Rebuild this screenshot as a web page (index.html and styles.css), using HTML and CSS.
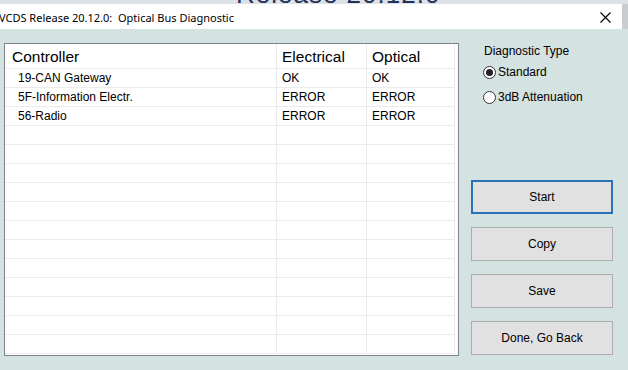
FILE: index.html
```html
<!DOCTYPE html>
<html lang="en">
<head>
  <meta charset="UTF-8" />
  <meta name="viewport" content="width=device-width, initial-scale=1.0" />
  <title>Optical Bus Diagnostic</title>
  <link rel="stylesheet" href="styles.css">
</head>
<body>
  <!-- window behind the dialog, only its bottom edge shows -->
  <div class="backdrop" aria-hidden="true"><span class="backdrop-text">Release 20.12.0</span></div>

  <div class="titlebar">
    <span class="title">VCDS Release 20.12.0:&nbsp; Optical Bus Diagnostic</span>
    <svg class="close" width="11" height="11" viewBox="0 0 11 11">
      <path d="M0.5 0.5 L10.5 10.5 M10.5 0.5 L0.5 10.5" stroke="#000" stroke-width="1.1" fill="none" />
    </svg>
  </div>

  <main class="content">
    <div class="list">
      <div class="row head">
        <div class="cell first">Controller</div>
        <div class="cell">Electrical</div>
        <div class="cell">Optical</div>
      </div>
      <div id="rows"></div>
    </div>

    <div class="side">
      <div class="type">
        <div class="type-label">Diagnostic Type</div>
        <label class="radio"><span class="dot checked"></span>Standard</label>
        <label class="radio"><span class="dot"></span>3dB Attenuation</label>
      </div>
      <div class="buttons">
        <button class="btn focused">Start</button>
        <button class="btn">Copy</button>
        <button class="btn">Save</button>
        <button class="btn">Done, Go Back</button>
      </div>
    </div>
  </main>

  <script>
    const results = [
      { name: '19-CAN Gateway', electrical: 'OK', optical: 'OK' },
      { name: '5F-Information Electr.', electrical: 'ERROR', optical: 'ERROR' },
      { name: '56-Radio', electrical: 'ERROR', optical: 'ERROR' }
    ];
    const rows = document.getElementById('rows');

    for (let i = 0; i < 15; i++) {
      const r = results[i] || { name: '', electrical: '', optical: '' };
      const row = document.createElement('div');
      row.className = 'row';
      [r.name, r.electrical, r.optical].forEach((text, c) => {
        const cell = document.createElement('div');
        cell.className = c === 0 ? 'cell first' : 'cell';
        cell.textContent = text;
        row.appendChild(cell);
      });
      rows.appendChild(row);
    }
  </script>
</body>
</html>
```

FILE: styles.css
```css
body { margin: 0; background: #d4e2e2; font-family: "Liberation Sans", Arial, sans-serif; font-size: 12px; color: #000; overflow: hidden; }

.backdrop { height: 4px; background: #dde2e6; overflow: hidden; padding-left: 236px; }
.backdrop-text { display: block; margin-top: -19px; font-size: 26px; line-height: 26px; color: #23305a; letter-spacing: 1px; }

.titlebar { height: 25px; background: #fff; display: flex; align-items: center; justify-content: space-between; padding-right: 11px; border-right: 6px solid #c9cdd0; }
.title { font-family: "Noto Sans", sans-serif; font-size: 11px; margin-left: -1px; padding-top: 1px; }
.close { display: block; margin-top: 1px; }

.content { display: flex; padding: 14px 0 0 4px; }

.list { width: 455px; height: 313px; box-sizing: border-box; border: 1px solid #7d8487; background: #fff; padding-right: 3px; overflow: hidden; }
.row { display: grid; grid-template-columns: 272px 90px 88px; height: 18px; border-bottom: 1px solid #ebebeb; }
.row.head { height: 24px; font-size: 15.5px; }
.cell { border-right: 1px solid #ebebeb; padding-left: 5px; line-height: 18px; white-space: nowrap; }
.cell.first { padding-left: 13px; }
.head .cell { line-height: 25px; }
.head .cell.first { padding-left: 7px; }

.side { margin-left: 12px; width: 142px; display: flex; flex-direction: column; }
.type { padding-left: 12px; display: flex; flex-direction: column; gap: 9px; }
.type-label { line-height: 16px; padding-left: 1px; margin-bottom: -4px; }
.radio { display: flex; align-items: center; gap: 2px; line-height: 16px; }
.dot { width: 11px; height: 11px; border: 1px solid #333; border-radius: 50%; background: #fff; display: flex; align-items: center; justify-content: center; }
.dot.checked::after { content: ""; width: 7px; height: 7px; border-radius: 50%; background: #222; }

.buttons { margin-top: 75px; display: flex; flex-direction: column; gap: 13px; }
.btn { height: 34px; background: #e1e1e1; border: 1px solid #adadad; font-family: "Liberation Sans", Arial, sans-serif; font-size: 12px; color: #000; padding: 0; }
.btn.focused { border: 2px solid #2a72b5; }
```
